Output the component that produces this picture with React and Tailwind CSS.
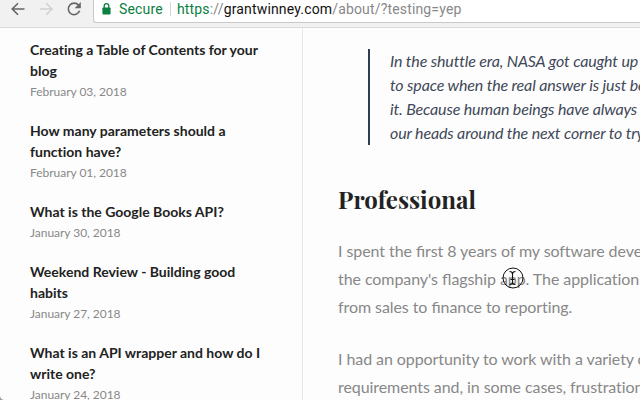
const posts = [
  { lines: ["Creating a Table of Contents for your", "blog"], date: "February 03, 2018" },
  { lines: ["How many parameters should a", "function have?"], date: "February 01, 2018" },
  { lines: ["What is the Google Books API?"], date: "January 30, 2018" },
  { lines: ["Weekend Review - Building good", "habits"], date: "January 27, 2018" },
  { lines: ["What is an API wrapper and how do I", "write one?"], date: "January 24, 2018" },
];

function Toolbar() {
  return (
    <header className="flex h-7 shrink-0 items-start border-b border-[#d9d9d9] bg-[#f1f1f1]">
      <svg className="h-[22px] w-[93px] shrink-0" viewBox="0 0 93 22" fill="none" strokeWidth="1.6">
        <path d="M24.5 9H12.5M18 3.2L12.2 9L18 14.8" stroke="#666" />
        <path d="M40 9H51.5M46.2 3.2L52 9L46.2 14.8" stroke="#d2d2d2" />
        <path d="M78.6 5.2A5.8 5.8 0 1 0 79.6 10.8" stroke="#666" />
        <path d="M80.8 2V8.2H74.6Z" fill="#666" />
      </svg>
      <div className="flex h-[23px] flex-1 items-start overflow-hidden rounded-bl-[3px] border-b border-l border-[#c9c9c9] bg-white">
        <svg className="ml-2 mt-[3px] h-3 w-[9px] shrink-0" viewBox="0 0 9 12">
          <rect x="0.4" y="4.4" width="8.2" height="7" rx="0.8" fill="#0b8043" />
          <path d="M2.2 5V3A2.3 2.3 0 0 1 6.8 3V5" fill="none" stroke="#0b8043" strokeWidth="1.3" />
        </svg>
        <span className="ml-2 w-[45px] whitespace-nowrap font-[Roboto,sans-serif] text-[14px] leading-[19px] tracking-[0.15px] text-[#0b8043]">Secure</span>
        <span className="ml-[6px] mt-[2px] h-[14px] w-px bg-[#d5d5d5]" />
        <span className="ml-[6px] whitespace-nowrap font-[Roboto,sans-serif] text-[14px] leading-[19px] tracking-[0.16px] text-[#888]">
          <span className="text-[#0b8043]">https</span>://<span className="text-[#111]">grantwinney.com</span>/about/?testing=yep
        </span>
      </div>
    </header>
  );
}

function Sidebar() {
  return (
    <aside className="flex w-[303px] shrink-0 flex-col gap-[19px] border-r border-[#e8e8e8] pl-[30px] pt-[11px]">
      {posts.map((post) => (
        <article key={post.date} className="whitespace-nowrap">
          <h3 className="text-[14px] font-bold leading-[21px] text-[#222]">
            {post.lines.map((line) => (
              <span key={line} className="block">{line}</span>
            ))}
          </h3>
          <time className="mt-0.5 block text-[12px] leading-[18px] tracking-[-0.03px] text-[#888]">{post.date}</time>
        </article>
      ))}
    </aside>
  );
}

function Cursor() {
  return (
    <svg className="absolute -left-[6px] -top-[2px] h-[22px] w-[22px]" viewBox="0 0 22 22" fill="none">
      <circle cx="11" cy="11" r="10" stroke="#111" strokeWidth="1" />
      <path d="M7.5 4.5Q10.5 4.5 10.5 7V15Q10.5 17.5 7.5 17.5M13.5 4.5Q10.5 4.5 10.5 7V15Q10.5 17.5 13.5 17.5M8.5 12.5H12.5" stroke="#111" strokeWidth="1.1" />
    </svg>
  );
}

// Joins the letters of an fi or fl pair inside otherwise unligated text.
function Lig({ children }) {
  return <span className="tracking-normal [font-variant-ligatures:normal]">{children}</span>;
}

function Content() {
  return (
    <main className="min-w-0 flex-1 overflow-hidden whitespace-nowrap pl-[35px] pt-[21px]">
      <blockquote className="ml-[30px] border-l-2 border-[#2c3e50] pl-5 text-[16px] italic leading-6 tracking-[-0.15px] text-[#3f4858]">
        <span className="block">In the shuttle era, NASA got caught up</span>
        <span className="block">to space when the real answer is just be</span>
        <span className="block">it. Because human beings have always</span>
        <span className="block">our heads around the next corner to try</span>
      </blockquote>
      <h2 className="mt-[38px] font-['Playfair_Display','Liberation_Serif',serif] text-[24px] font-bold leading-8 text-[#222]">Professional</h2>
      <p className="mt-[22px] text-[16px] leading-7 tracking-[-0.075px] text-[#888]">
        <span className="block">I spent the <Lig>fi</Lig>rst 8 years of my software deve</span>
        <span className="block">the company's <Lig>fl</Lig>agship a<span className="relative">p<Cursor /></span>p. The application</span>
        <span className="block">from sales to <Lig>fi</Lig>nance to reporting.</span>
      </p>
      <p className="mt-6 text-[16px] leading-7 tracking-[-0.075px] text-[#888]">
        <span className="block">I had an opportunity to work with a variety o</span>
        <span className="block">requirements and, in some cases, frustration</span>
      </p>
    </main>
  );
}

export default function App() {
  return (
    <div className="relative flex h-[400px] w-[640px] flex-col overflow-hidden bg-[#fdfdfd] font-[Lato,sans-serif] [font-variant-ligatures:none]">
      <Toolbar />
      <div className="flex min-h-0 flex-1 overflow-hidden">
        <Sidebar />
        <Content />
      </div>
      <svg className="absolute bottom-0 left-0 h-1 w-1" viewBox="0 0 4 4">
        <path d="M0 0Q0.5 3.5 4 4H0Z" fill="#999" />
      </svg>
    </div>
  );
}
